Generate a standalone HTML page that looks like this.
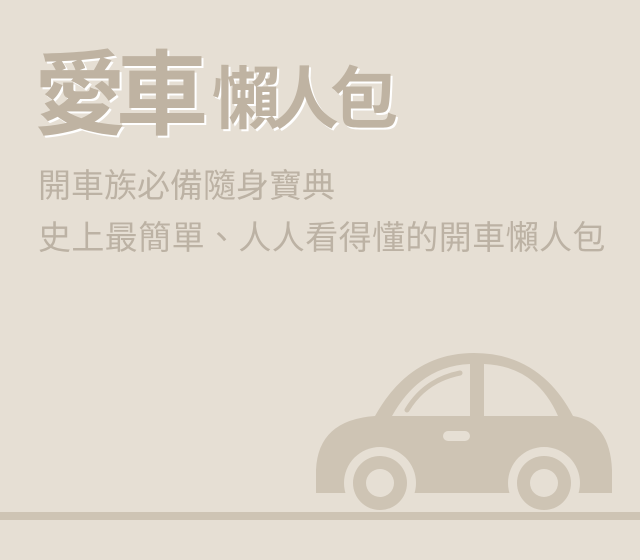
<!DOCTYPE html>
<html><head><meta charset="utf-8"><style>
html,body{margin:0;padding:0}
body{width:640px;height:560px;background:#e6dfd4;position:relative;overflow:hidden;font-family:"Liberation Sans","Noto Sans CJK TC",sans-serif}
.t{position:absolute;color:#bfb3a2;font-weight:bold;text-shadow:2px 2px 0 #fff;white-space:nowrap;line-height:1}
.s{position:absolute;left:38px;color:#bcb2a4;font-size:33px;line-height:1;white-space:nowrap}
</style></head><body>
<div class="t" style="left:34px;top:50px;font-size:92px;letter-spacing:-10px">愛車</div>
<div class="t" style="left:212px;top:66px;font-size:68px;letter-spacing:-9px">懶人包</div>
<div class="s" style="top:169px;letter-spacing:0px">開車族必備隨身寶典</div>
<div class="s" style="top:221px;letter-spacing:0.4px">史上最簡單、人人看得懂的開車懶人包</div>
<svg width="640" height="560" style="position:absolute;left:0;top:0">
<path d="M316 493 L316 470 Q318 420 375 416 Q410 353 474 353 Q540 353 573 416 Q610 422 612 470 L612 493 Z" fill="#cec4b4"/>
<path d="M392 416 Q420 366 470 364 L470 416 Z" fill="#e6dfd4"/>
<path d="M484 364 Q536 366 558 416 L484 416 Z" fill="#e6dfd4"/>
<path d="M407 410 Q425 380 460 373" stroke="#cec4b4" stroke-width="5" fill="none" stroke-linecap="round"/>
<rect x="443" y="431" width="27" height="10" rx="5" fill="#e6dfd4"/>
<circle cx="380" cy="483" r="36" fill="#e6dfd4"/>
<circle cx="544" cy="483" r="36" fill="#e6dfd4"/>
<circle cx="380" cy="483" r="27" fill="#cec4b4"/>
<circle cx="544" cy="483" r="27" fill="#cec4b4"/>
<circle cx="380" cy="483" r="14" fill="#e6dfd4"/>
<circle cx="544" cy="483" r="14" fill="#e6dfd4"/>
<rect x="0" y="512" width="640" height="8" fill="#cec4b4"/>
</svg>
</body></html>
